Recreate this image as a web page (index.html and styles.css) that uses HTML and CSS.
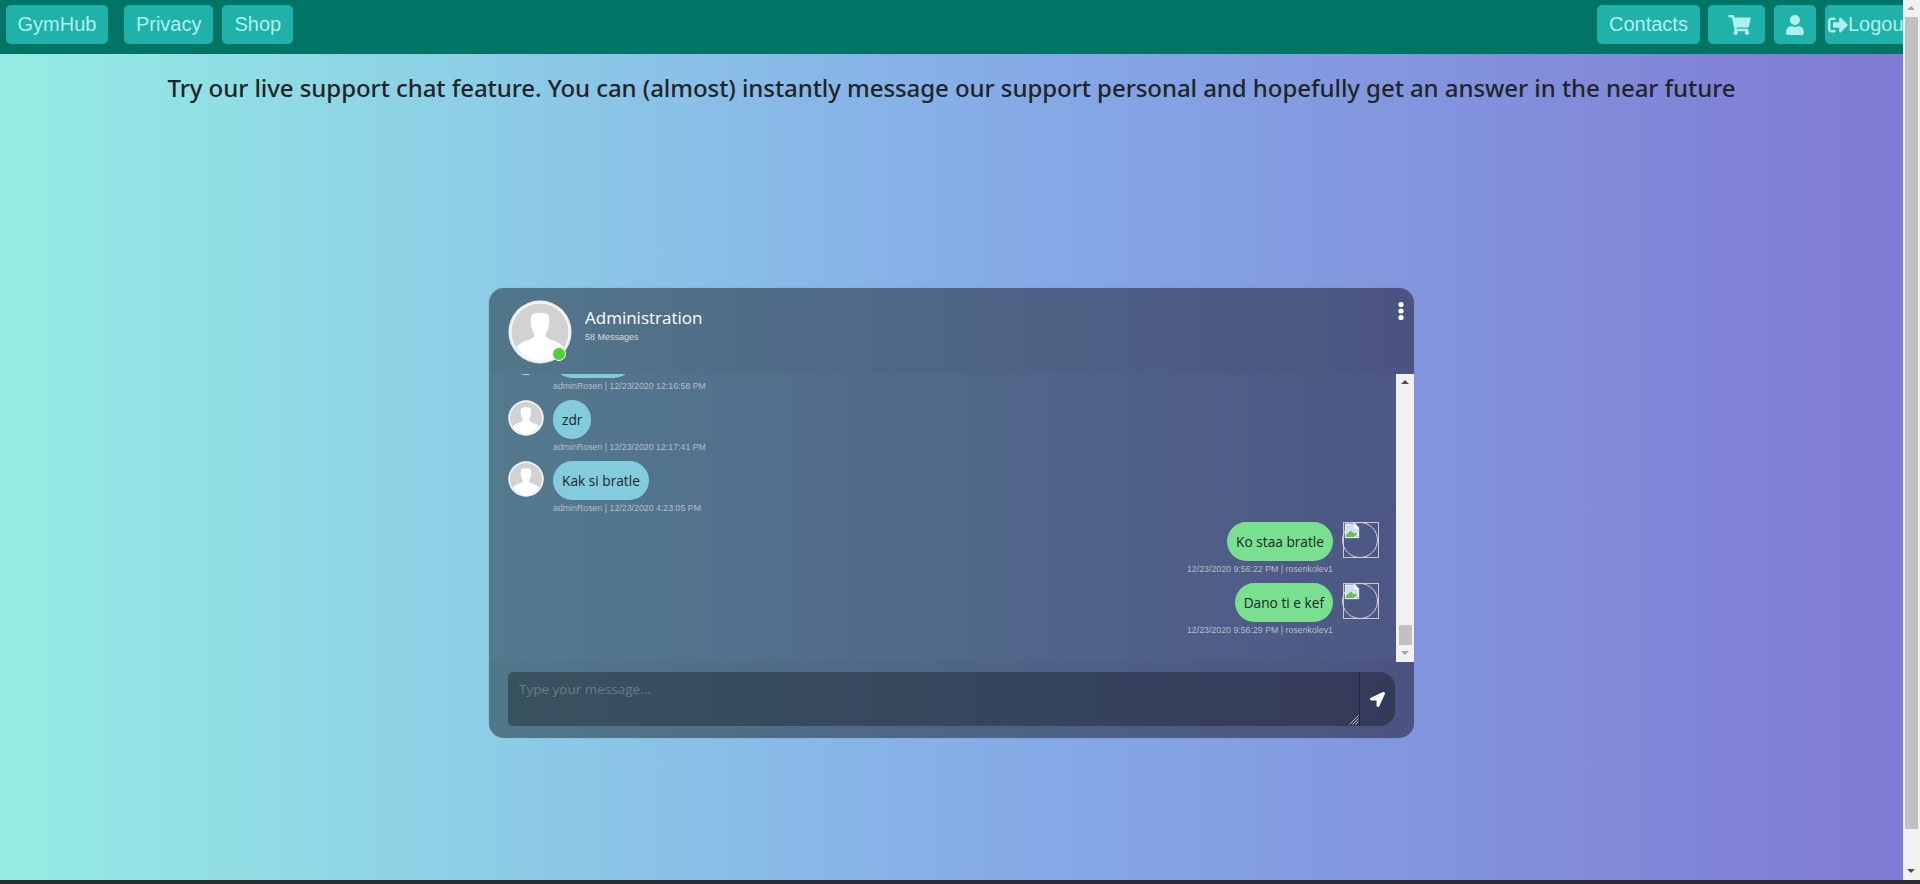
FILE: index.html

```html
<!DOCTYPE html>
<html>
<head>
    <title>GymHub - Live Support</title>
    <meta charset="UTF-8">
    <link rel="stylesheet" href="styles.css">
</head>
<body>
    <div class="window">
        <div class="page">
            <nav class="navbar">
                <a class="nav-btn brand">GymHub</a>
                <a class="nav-btn">Privacy</a>
                <a class="nav-btn">Shop</a>
                <div class="nav-right">
                    <a class="nav-btn contacts-btn">Contacts</a>
                    <a class="nav-btn cart-btn">
                        <svg class="icon-cart" viewBox="0 0 576 512"><path d="M528.12 301.319l47.273-208C578.806 78.301 567.391 64 551.99 64H159.208l-9.166-44.81C147.758 8.021 137.93 0 126.529 0H24C10.745 0 0 10.745 0 24v16c0 13.255 10.745 24 24 24h69.883l70.248 343.435C147.325 417.1 136 435.222 136 456c0 30.928 25.072 56 56 56s56-25.072 56-56c0-15.674-6.447-29.835-16.824-40h209.647C430.447 426.165 424 440.326 424 456c0 30.928 25.072 56 56 56s56-25.072 56-56c0-22.172-12.888-41.332-31.579-50.405l5.517-24.276c3.413-15.018-8.002-29.319-23.403-29.319H218.117l-6.545-32h293.145c11.206 0 20.92-7.754 23.403-18.681z"/></svg>
                    </a>
                    <a class="nav-btn user-btn">
                        <svg class="icon-user" viewBox="0 0 448 512"><path d="M224 256c70.7 0 128-57.3 128-128S294.7 0 224 0 96 57.3 96 128s57.3 128 128 128zm89.6 32h-16.7c-22.2 10.2-46.9 16-72.9 16s-50.6-5.8-72.9-16h-16.7C60.2 288 0 348.2 0 422.4V464c0 26.5 21.5 48 48 48h352c26.5 0 48-21.5 48-48v-41.6c0-74.2-60.2-134.4-134.4-134.4z"/></svg>
                    </a>
                    <a class="nav-btn logout-btn">
                        <svg class="icon-logout" viewBox="0 0 512 512"><path d="M497 273L329 441c-15 15-41 4.5-41-17v-96H152c-13.3 0-24-10.7-24-24v-96c0-13.3 10.7-24 24-24h136V88c0-21.4 25.9-32 41-17l168 168c9.3 9.4 9.3 24.6 0 34zM192 436v-40c0-6.6-5.4-12-12-12H96c-17.7 0-32-14.3-32-32V160c0-17.7 14.3-32 32-32h84c6.6 0 12-5.4 12-12V76c0-6.6-5.4-12-12-12H96c-53 0-96 43-96 96v192c0 53 43 96 96 96h84c6.6 0 12-5.4 12-12z"/></svg>Logout
                    </a>
                </div>
            </nav>

            <main class="content">
                <h1 class="intro">Try our live support chat feature. You can (almost) instantly message our support personal and hopefully get an answer in the near future</h1>

                <section class="chat">
                    <header class="chat-header">
                        <div class="avatar-wrap">
                            <svg class="avatar avatar-lg" viewBox="0 0 64 64"><use href="#person"/></svg>
                            <span class="online-dot"></span>
                        </div>
                        <div class="chat-title">
                            <div class="chat-name">Administration</div>
                            <div class="chat-count">58 Messages</div>
                        </div>
                        <svg class="chat-menu" viewBox="0 0 6 20"><circle cx="3" cy="3.5" r="2.6"/><circle cx="3" cy="10" r="2.6"/><circle cx="3" cy="16.5" r="2.6"/></svg>
                    </header>

                    <div class="chat-body">
                        <div class="messages">
                            <div class="msg">
                                <svg class="avatar" viewBox="0 0 64 64"><use href="#person"/></svg>
                                <div class="msg-text">
                                    <div class="bubble bubble-in bubble-scrolled"></div>
                                    <div class="msg-time">adminRosen | 12/23/2020 12:16:58 PM</div>
                                </div>
                            </div>
                            <div class="msg">
                                <svg class="avatar" viewBox="0 0 64 64"><use href="#person"/></svg>
                                <div class="msg-text">
                                    <div class="bubble bubble-in">zdr</div>
                                    <div class="msg-time">adminRosen | 12/23/2020 12:17:41 PM</div>
                                </div>
                            </div>
                            <div class="msg">
                                <svg class="avatar" viewBox="0 0 64 64"><use href="#person"/></svg>
                                <div class="msg-text">
                                    <div class="bubble bubble-in">Kak si bratle</div>
                                    <div class="msg-time">adminRosen | 12/23/2020 4:23:05 PM</div>
                                </div>
                            </div>
                            <div class="msg msg-own">
                                <div class="msg-text">
                                    <div class="bubble bubble-out">Ko staa bratle</div>
                                    <div class="msg-time">12/23/2020 9:56:22 PM | rosenkolev1</div>
                                </div>
                                <div class="broken-img"><svg viewBox="0 0 16 16"><use href="#broken"/></svg></div>
                            </div>
                            <div class="msg msg-own">
                                <div class="msg-text">
                                    <div class="bubble bubble-out">Dano ti e kef</div>
                                    <div class="msg-time">12/23/2020 9:56:29 PM | rosenkolev1</div>
                                </div>
                                <div class="broken-img"><svg viewBox="0 0 16 16"><use href="#broken"/></svg></div>
                            </div>
                        </div>
                        <div class="scrollbar scrollbar-inner">
                            <span class="arrow-up"></span>
                            <div class="scroll-track"><div class="scroll-thumb"></div></div>
                            <span class="arrow-down"></span>
                        </div>
                    </div>

                    <footer class="chat-footer">
                        <div class="chat-input">
                            <div class="input-box">
                                <span class="placeholder">Type your message...</span>
                                <svg class="resize-grip" viewBox="0 0 10 10"><path d="M0.500 9.500L9.500 0.500M3.500 9.500L9.500 3.500M6.500 9.500L9.500 6.500"/></svg>
                            </div>
                            <div class="send-btn">
                                <svg viewBox="0 0 512 512"><path d="M444.52 3.52L28.74 195.42c-47.97 22.39-31.98 92.75 19.19 92.75h175.91v175.91c0 51.17 70.36 67.17 92.75 19.19l191.9-415.78c15.99-38.39-25.59-79.97-63.97-63.97z"/></svg>
                            </div>
                        </div>
                    </footer>
                </section>
            </main>
        </div>

        <div class="scrollbar scrollbar-page">
            <span class="arrow-up"></span>
            <div class="scroll-track"><div class="scroll-thumb"></div></div>
            <span class="arrow-down"></span>
        </div>
    </div>
    <div class="taskbar"></div>

    <svg class="defs" width="0" height="0">
        <defs>
            <g id="person">
                <circle cx="32" cy="32" r="31.500" fill="#fff"/>
                <circle cx="32" cy="32" r="30.300" fill="none" stroke="#bcc5cb" stroke-width="0.500"/>
                <circle cx="32" cy="32" r="28.600" fill="#d2d2d2"/>
                <path fill="#fff" d="M24 14.500c2-2 14-2 16 0 1.600 2 1.400 8 .8 12-.6 3.600-3 6-3.200 8.500-.1 2.400 2 3.600 6 5 4 1.400 8.800 3 11.800 7.200C50 55.700 41.500 60.600 32 60.600S14 55.700 8.600 47.200C11.600 43 16.200 41.400 20.400 40c4-1.400 6-2.600 5.900-5-.2-2.500-2.600-4.900-3.200-8.500-.6-4-.7-10 .9-12z"/>
            </g>
            <g id="broken">
                <path fill="#fff" stroke="#a9b4c4" stroke-width="0.600" d="M1 .5h10l4 4v10.500H1z"/>
                <path fill="#cfe0f7" d="M2 1.500h8.500v4H14v5H2z"/>
                <path fill="#6cbf55" d="M2 14v-2.500L7 7.500l3 3 1.500-1 2.500 2V14z"/>
                <path fill="#fff" d="M8.500 15l6.500-5v1.600L11 15z"/>
            </g>
        </defs>
    </svg>
</body>
</html>
```

FILE: styles.css

```css
html, body { margin: 0; height: 100%; overflow: hidden; }
body {
    font-family: "Liberation Sans", Arial, sans-serif;
    display: flex;
    flex-direction: column;
}
.defs { position: absolute; }

.window { flex: 1; display: flex; min-height: 0; }
.page {
    flex: 1;
    min-width: 0;
    display: flex;
    flex-direction: column;
    overflow: hidden;
    background: linear-gradient(to right, #94ede3 0%, #86aee8 50%, #7f7ad3 100%);
}
.taskbar { height: 4px; background: #2b2d30; }

/* navbar */
.navbar {
    height: 54px;
    flex: none;
    display: flex;
    align-items: flex-start;
    padding: 5px 0 0 6px;
    box-sizing: border-box;
    background: #007465;
}
.nav-btn {
    height: 39px;
    display: flex;
    align-items: center;
    flex: none;
    padding: 0 12px;
    margin-right: 9px;
    border-radius: 5px;
    background: #20b2aa;
    color: #aff0ee;
    font-size: 20px;
    box-sizing: border-box;
}
.brand { margin-right: 16px; padding: 0 11.5px; }
.nav-right { display: flex; margin-left: auto; width: 306px; flex: none; }
.contacts-btn { margin-right: 8px; }
.cart-btn { width: 57px; padding: 0 0 0 20px; }
.user-btn { width: 42px; padding: 0 0 0 12px; }
.logout-btn { padding: 0 12px 0 3px; margin-right: 0; }
.icon-cart { width: 23px; height: 20px; fill: #aff0ee; }
.icon-user { width: 18px; height: 20px; fill: #aff0ee; }
.icon-logout { width: 20px; height: 20px; fill: #aff0ee; }

/* main */
.content { flex: 1; display: flex; flex-direction: column; align-items: center; }
.intro {
    margin: 16px 0 0;
    font-family: "Noto Sans", "Open Sans", sans-serif;
    font-size: 24px;
    line-height: 36px;
    font-weight: 500;
    letter-spacing: -0.06px;
    color: #212529;
    white-space: nowrap;
}

.chat {
    width: 925px;
    height: 450px;
    margin-top: 182px;
    display: flex;
    flex-direction: column;
    border-radius: 15px;
    overflow: hidden;
    background: linear-gradient(to right, #547a8e 0%, #4d5685 100%);
    box-shadow: 0 0 1px rgba(0,0,0,0.3);
}
.chat-header {
    height: 86px;
    flex: none;
    display: flex;
    align-items: flex-start;
    padding: 12px 10px 0 19px;
    box-sizing: border-box;
    background: rgba(0,0,0,0.025);
}
.avatar { width: 36px; height: 36px; flex: none; display: block; }
.avatar-lg { width: 64px; height: 64px; }
.avatar-wrap { position: relative; width: 64px; height: 64px; flex: none; }
.online-dot {
    position: absolute;
    right: 6px;
    bottom: 3px;
    width: 14px;
    height: 14px;
    border-radius: 50%;
    background: #4cd137;
    border: 1px solid #fff;
    box-sizing: border-box;
}
.chat-title { margin-left: 13px; margin-top: 5px; flex: 1; }
.chat-name {
    font-family: "Open Sans", "Noto Sans", sans-serif;
    font-size: 17px;
    line-height: 26px;
    color: #fff;
}
.chat-count { font-size: 9px; line-height: 12px; margin-top: 0; color: #d5dbe2; }
.chat-menu { width: 6px; height: 20px; fill: #fff; margin-top: 1px; }

.chat-body { flex: 1; min-height: 0; display: flex; }
.messages {
    flex: 1;
    min-width: 0;
    display: flex;
    flex-direction: column;
    justify-content: flex-end;
    overflow: hidden;
    padding: 0 17px 18px 19px;
    box-sizing: border-box;
}
.msg { display: flex; flex: none; height: 61px; align-items: flex-start; }
.msg-text { margin-left: 9px; }
.msg-own { justify-content: flex-end; }
.msg-own .msg-text { margin-left: 0; text-align: right; display: flex; flex-direction: column; align-items: flex-end; }
.bubble {
    display: inline-block;
    height: 39px;
    line-height: 39px;
    padding: 0 9px;
    border-radius: 20px;
    font-family: "Open Sans", "Noto Sans", sans-serif;
    font-size: 13.7px;
    color: #212529;
    box-sizing: border-box;
    vertical-align: top;
}
.bubble-in { background: #82ccdd; }
.bubble-out { background: #78e08f; }
.bubble-scrolled { width: 80px; }
.msg-time { font-size: 8.8px; line-height: 12px; margin-top: 2px; color: #b3bfca; white-space: nowrap; }
.broken-img {
    width: 36px;
    height: 36px;
    flex: none;
    margin-left: 10px;
    border: 1px solid #c8c8c8;
    box-sizing: border-box;
    position: relative;
}
.broken-img::after {
    content: "";
    position: absolute;
    inset: -1px 0 -1px -2px;
    border: 1px solid #d8d8d8;
    border-radius: 50%;
}
.broken-img svg { width: 16px; height: 16px; display: block; }

/* scrollbars */
.scrollbar {
    width: 17px;
    flex: none;
    display: flex;
    flex-direction: column;
    align-items: center;
    background: #f1f1f1;
}
.scrollbar-inner { width: 18px; }
.scroll-track { flex: 1; width: 13px; display: flex; flex-direction: column; }
.scroll-thumb { background: #c1c1c1; }
.scrollbar-page .scroll-thumb { height: 812px; }
.scrollbar-inner .scroll-track { justify-content: flex-end; }
.scrollbar-inner .scroll-thumb { height: 20px; }
.arrow-up, .arrow-down { height: 17px; width: 17px; flex: none; position: relative; }
.arrow-up::after, .arrow-down::after {
    content: "";
    position: absolute;
    left: 4px;
    border-left: 4px solid transparent;
    border-right: 4px solid transparent;
}
.arrow-up::after { top: 6px; border-bottom: 4px solid #505050; }
.arrow-down::after { top: 6px; border-top: 4px solid #505050; }
.scrollbar-page .arrow-up::after { border-bottom-color: #a3a3a3; }
.scrollbar-inner .arrow-down::after { border-top-color: #a3a3a3; }

/* input */
.chat-footer { height: 76px; flex: none; padding: 10px 0 0 19px; box-sizing: border-box; background: rgba(0,0,0,0.025); }
.chat-input { display: flex; width: 887px; height: 54px; }
.input-box {
    flex: 1;
    position: relative;
    border-radius: 5px 0 0 5px;
    background: rgba(0,0,0,0.3);
    padding: 7px 11px;
    box-sizing: border-box;
}
.placeholder { font-family: "Open Sans", "Noto Sans", sans-serif; font-size: 13.5px; line-height: 20px; color: #6b7a88; }
.resize-grip { position: absolute; right: 0; bottom: 1px; width: 10px; height: 10px; stroke: #bbb; stroke-width: 1; fill: none; }
.send-btn {
    width: 35px;
    flex: none;
    display: flex;
    align-items: center;
    justify-content: center;
    border-left: 1px solid #20263f;
    border-radius: 0 15px 15px 0;
    background: rgba(0,0,0,0.3);
}
.send-btn svg { width: 15px; height: 15px; fill: #fff; }
```
